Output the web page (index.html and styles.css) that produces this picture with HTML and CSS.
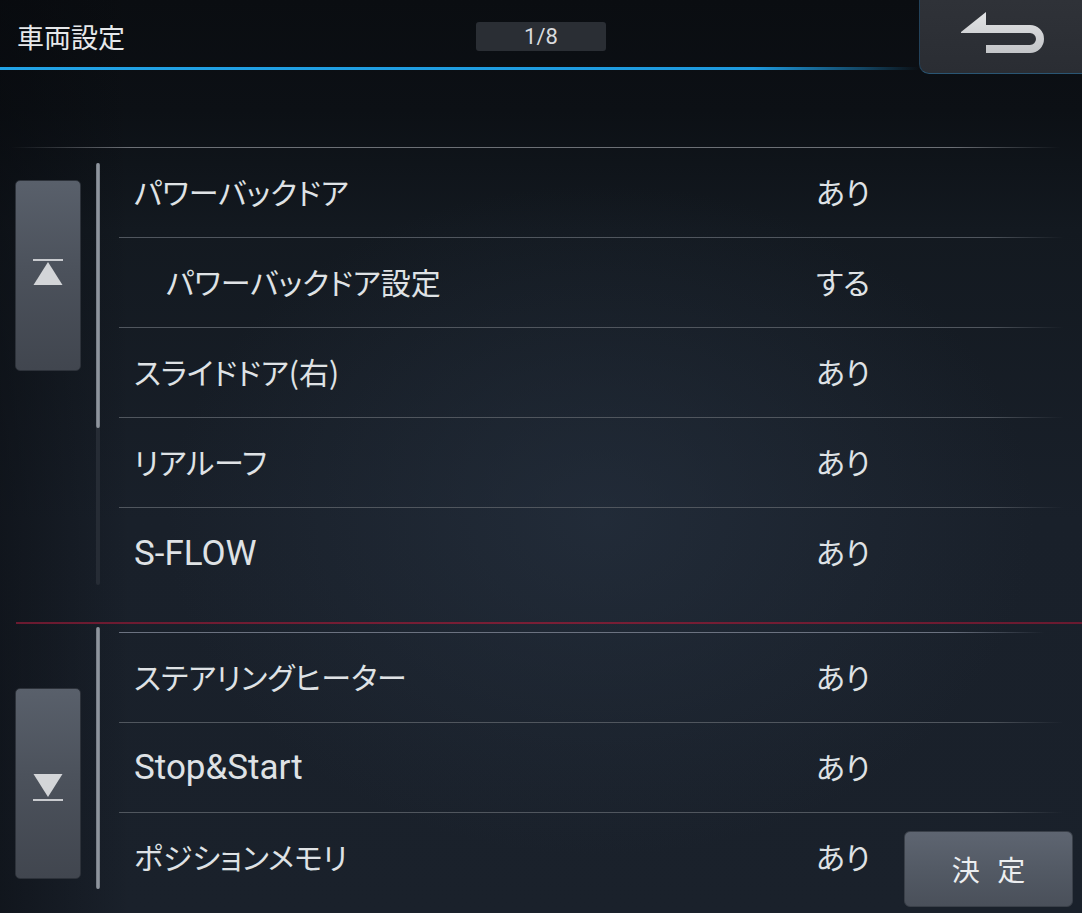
FILE: index.html
```html
<!DOCTYPE html>
<html lang="ja">

<head>
    <meta charset="UTF-8">
    <meta name="viewport" content="width=device-width, initial-scale=1.0">
    <title>車両設定</title>
    <link rel="stylesheet" href="styles.css">
</head>

<body>
    <div class="screen">
        <header class="topbar">
            <div class="topbar-main">
                <div class="title-row">
                    <h1 class="title">車両設定</h1>
                    <div class="page-count">1/8</div>
                </div>
                <div class="accent-line"></div>
            </div>
            <!-- back -->
            <button class="back-button" aria-label="戻る">
                <svg width="162" height="73" viewBox="0 0 162 73">
                    <defs>
                        <linearGradient id="arrowFill" x1="0" y1="0" x2="0" y2="1">
                            <stop offset="0" stop-color="#e2e3e5" />
                            <stop offset="1" stop-color="#c3c5c8" />
                        </linearGradient>
                    </defs>
                    <path d="M41 32 L66 12 V25 H110 A14 14 0 0 1 110 53 H66 V45 H110 A6 6 0 0 0 110 33 H41 Z" fill="url(#arrowFill)" />
                </svg>
            </button>
        </header>

        <div class="top-rule"></div>

        <section class="pane upper">
            <div class="side">
                <button class="page-button up" aria-label="上へ">
                    <svg width="30" height="27" viewBox="0 0 30 27">
                        <rect x="0" y="0" width="30" height="2" fill="#c9cbcf" />
                        <polygon points="15,3 29.5,26 0.5,26" fill="#d3d5d8" />
                    </svg>
                </button>
            </div>
            <div class="scrollbar">
                <div class="thumb"></div>
            </div>
            <ul class="rows">
                <li class="row"><span class="label">パワーバックドア</span><span class="value">あり</span></li>
                <li class="row"><span class="label sub">パワーバックドア設定</span><span class="value">する</span></li>
                <li class="row"><span class="label">スライドドア(右)</span><span class="value">あり</span></li>
                <li class="row"><span class="label">リアルーフ</span><span class="value">あり</span></li>
                <li class="row"><span class="label latin">S-FLOW</span><span class="value">あり</span></li>
            </ul>
        </section>

        <div class="red-rule"></div>

        <section class="pane lower">
            <div class="side">
                <button class="page-button down" aria-label="下へ">
                    <svg width="30" height="27" viewBox="0 0 30 27">
                        <polygon points="0.5,0 29.5,0 15,23" fill="#d3d5d8" />
                        <rect x="0" y="25" width="30" height="2" fill="#c9cbcf" />
                    </svg>
                </button>
            </div>
            <div class="scrollbar">
                <div class="thumb full"></div>
            </div>
            <ul class="rows">
                <li class="row"><span class="label">ステアリングヒーター</span><span class="value">あり</span></li>
                <li class="row"><span class="label latin">Stop&amp;Start</span><span class="value">あり</span></li>
                <li class="row"><span class="label">ポジションメモリ</span><span class="value">あり</span></li>
            </ul>
        </section>

        <button class="ok-button">決 定</button>
    </div>
</body>

</html>
```

FILE: styles.css
```css
* {
    box-sizing: border-box;
}

body {
    margin: 0;
    font-family: 'Noto Sans CJK JP', sans-serif;
    color: #dfe2e5;
    background-color: #0b0e12;
}

.screen {
    position: relative;
    width: 1082px;
    height: 913px;
    overflow: hidden;
    background:
        radial-gradient(ellipse 620px 480px at 600px 520px, rgba(42, 54, 70, 0.5), rgba(42, 54, 70, 0) 70%),
        linear-gradient(90deg, rgba(6, 8, 12, 0.45) 0, rgba(6, 8, 12, 0) 130px),
        linear-gradient(180deg, #0a0d11 0, #0c1015 110px, #131920 230px, #19202a 520px, #1a212b 913px);
}

/* header */

.topbar {
    display: flex;
    height: 74px;
}

.topbar-main {
    flex: 1;
}

.title-row {
    display: grid;
    grid-template-columns: 476px 130px;
    align-items: center;
    height: 67px;
    padding-top: 6px;
}

.title {
    margin: 0;
    padding-left: 17px;
    font-size: 27px;
    font-weight: 400;
    color: #e6e8ea;
}

.page-count {
    height: 29px;
    line-height: 29px;
    text-align: center;
    font-family: Roboto, sans-serif;
    font-size: 22px;
    color: #d9dbde;
    background-color: #2a2e34;
    border-radius: 3px;
}

.accent-line {
    height: 3px;
    background: linear-gradient(90deg, #22a3e6 0, #1e9ade 82%, rgba(30, 150, 216, 0.4) 94%, rgba(30, 150, 216, 0) 100%);
}

.back-button {
    width: 163px;
    height: 74px;
    padding: 0;
    border: none;
    border-left: 1px solid #23425a;
    border-bottom: 1px solid #2a5674;
    border-bottom-left-radius: 10px;
    background: linear-gradient(180deg, #2f3238 0, #2a2d33 100%);
    cursor: pointer;
}

.back-button svg {
    display: block;
}

.top-rule {
    height: 1px;
    margin-top: 73px;
    background: linear-gradient(90deg, rgba(110, 114, 120, 0) 1%, #6c7076 12%, #6c7076 88%, rgba(110, 114, 120, 0) 98%);
}

/* list panes */

.pane {
    display: flex;
    align-items: flex-start;
}

.pane.upper {
    height: 450px;
}

.pane.lower {
    height: 286px;
}

.side {
    width: 81px;
    padding-left: 15px;
}

.upper .side {
    padding-top: 32px;
}

.lower .side {
    padding-top: 61px;
}

.page-button {
    display: flex;
    align-items: center;
    justify-content: center;
    width: 66px;
    height: 191px;
    padding: 0;
    border: 1px solid #2d323a;
    border-radius: 5px;
    background: linear-gradient(180deg, #59606b 0, #4c525c 45%, #41464f 100%);
    cursor: pointer;
}

.page-button.up {
    padding-bottom: 6px;
}

.page-button.down {
    padding-top: 8px;
}

.scrollbar {
    width: 4px;
    margin-left: 15px;
    border-radius: 2px;
    background-color: #262c35;
}

.upper .scrollbar {
    height: 422px;
    margin-top: 15px;
}

.lower .scrollbar {
    height: 262px;
}

.thumb {
    height: 265px;
    border-radius: 2px;
    background: linear-gradient(90deg, #6c737d, #9aa0a8 50%, #6c737d);
}

.thumb.full {
    height: 100%;
}

.rows {
    flex: 1;
    margin: 0 0 0 19px;
    padding: 0;
    list-style: none;
}

.lower .rows {
    margin-top: 5px;
    border-top: 1px solid;
    border-image: linear-gradient(90deg, #6b7280 0, #6b7280 86%, rgba(107, 114, 128, 0) 96%) 1;
}

.row {
    display: grid;
    grid-template-columns: 697px 1fr;
    align-items: center;
    height: 90px;
    padding-bottom: 4px;
    font-size: 30px;
    font-feature-settings: "palt";
    border-bottom: 1px solid;
    border-image: linear-gradient(90deg, #50565e 0, #50565e 90%, rgba(80, 86, 94, 0) 98%) 1;
}

.row:last-child {
    border-bottom: none;
}

.label {
    padding-left: 15px;
    white-space: nowrap;
}

.label.sub {
    padding-left: 47px;
}

.label.latin {
    margin-top: 4px;
    font-family: Roboto, sans-serif;
    font-size: 35px;
}

.value {
    white-space: nowrap;
}

.red-rule {
    height: 2px;
    margin: 24px 0 3px 16px;
    background: linear-gradient(90deg, #6a1a30 0, #7a1f36 50%, #6a1a30 100%);
}

/* confirm button sits over the last row */
.ok-button {
    position: absolute;
    right: 9px;
    bottom: 6px;
    width: 169px;
    height: 76px;
    padding: 0;
    border: 1px solid #3a4049;
    border-radius: 6px;
    background: linear-gradient(180deg, #5e6571 0, #535a65 50%, #4a505a 100%);
    font-family: 'Noto Sans CJK JP', sans-serif;
    font-size: 28px;
    word-spacing: 11px;
    color: #eceef0;
    cursor: pointer;
}
```
